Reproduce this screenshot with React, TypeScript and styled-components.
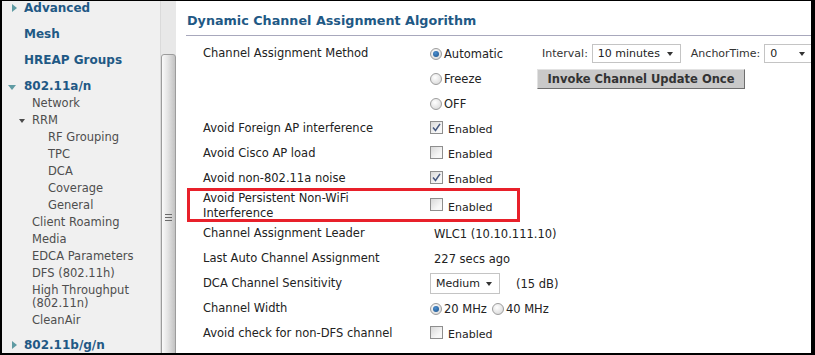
import React from "react";
import styled, { createGlobalStyle } from "styled-components";

const GlobalStyle = createGlobalStyle`
  html, body {
    margin: 0;
    padding: 0;
    background: #000;
  }
  body {
    font-family: "DejaVu Sans", Verdana, sans-serif;
  }
`;

const Frame = styled.div`
  width: 815px;
  height: 355px;
  box-sizing: border-box;
  border-style: solid;
  border-color: #000;
  border-width: 1px 4px 2px 2px;
  display: flex;
  overflow: hidden;
  background: #fff;
`;

/* ---------- left navigation ---------- */

const Sidebar = styled.nav`
  width: 158px;
  flex-shrink: 0;
  background: #f0f0f0;
  overflow: hidden;
`;

const NavList = styled.div`
  margin-top: -6px;
  display: flex;
  flex-direction: column;
`;

const Header = styled.div<{ $gap?: number }>`
  height: 26px;
  display: flex;
  align-items: center;
  padding-left: 6px;
  margin-top: ${p => p.$gap ?? 0}px;
  font-size: 12px;
  font-weight: bold;
  color: #1f5985;
  white-space: nowrap;
`;

const CaretSlot = styled.span`
  width: 16px;
  flex-shrink: 0;
  display: flex;
  align-items: center;
`;

const Caret = styled.span<{ $open?: boolean }>`
  width: 0;
  height: 0;
  ${p =>
    p.$open
      ? `border-left: 4.5px solid transparent;
         border-right: 4.5px solid transparent;
         border-top: 5px solid #5f9ba3;
         margin-top: 2px;`
      : `border-top: 4.5px solid transparent;
         border-bottom: 4.5px solid transparent;
         border-left: 5px solid #5f9ba3;
         margin-left: 4px;`}
`;

const SubList = styled.div`
  margin-top: -4px;
  display: flex;
  flex-direction: column;
`;

const SubItem = styled.div<{ $indent: number }>`
  padding: 2px 4px 2px ${p => p.$indent}px;
  line-height: 13px;
  font-size: 11.5px;
  color: #4e4e4e;
  display: flex;
  align-items: center;
`;

const SmallCaret = styled.span`
  width: 0;
  height: 0;
  border-left: 3px solid transparent;
  border-right: 3px solid transparent;
  border-top: 4px solid #4a4a4a;
  margin-left: -13px;
  margin-right: 7px;
`;

/* ---------- scrollbar column ---------- */

const ScrollTrack = styled.div`
  width: 16px;
  flex-shrink: 0;
  box-sizing: border-box;
  background: #e8e8e8;
  border-left: 1px solid #dadada;
  display: flex;
  flex-direction: column;
`;

const ScrollThumb = styled.div`
  margin-top: 53px;
  flex: 1;
  margin-bottom: -20px;
  border: 1px solid #9c9c9c;
  border-radius: 3px 3px 0 0;
  background: linear-gradient(to right, #fafafa, #e4e4e4 45%, #c2c2c2);
  display: flex;
  justify-content: center;
`;

const Grip = styled.div`
  margin-top: 159px;
  width: 7px;
  height: 7px;
  background: repeating-linear-gradient(
    to bottom,
    #6a6a6a 0,
    #6a6a6a 1px,
    transparent 1px,
    transparent 3px
  );
`;

/* ---------- main panel ---------- */

const Main = styled.main`
  flex: 1;
  padding-left: 10px;
  color: #222;
  font-size: 11.5px;
`;

const Title = styled.h1`
  margin: 0;
  padding: 10px 0 4px 1px;
  line-height: 20px;
  font-size: 12.75px;
  font-weight: bold;
  color: #1f5985;
  border-bottom: 1px solid #a8a8bc;
`;

const Form = styled.div`
  margin: 5px 0 0 17px;
  display: flex;
  flex-direction: column;
`;

const Row = styled.div<{ $tall?: boolean }>`
  position: relative;
  display: grid;
  grid-template-columns: 227px 1fr;
  align-items: center;
  height: ${p => (p.$tall ? 30 : 25)}px;
`;

const Label = styled.div`
  line-height: 15px;
`;

const Value = styled.div`
  display: flex;
  align-items: center;
  white-space: nowrap;
`;

const Highlight = styled.div`
  position: absolute;
  left: -16px;
  top: -3px;
  width: 333px;
  height: 34px;
  box-sizing: border-box;
  border: 3px solid #e8202a;
  pointer-events: none;
`;

const RadioOption = styled.span<{ $width?: number }>`
  display: inline-flex;
  align-items: center;
  gap: 2px;
  ${p => (p.$width ? `width: ${p.$width}px;` : "margin-right: 5px;")}
`;

const RadioCircle = styled.span<{ $checked?: boolean }>`
  width: 12px;
  height: 12px;
  box-sizing: border-box;
  border-radius: 50%;
  border: 1px solid #9d9d9d;
  background: radial-gradient(circle at 40% 35%, #ffffff, #d2d2d2);
  display: inline-flex;
  align-items: center;
  justify-content: center;
  &::after {
    content: "";
    display: ${p => (p.$checked ? "block" : "none")};
    width: 6px;
    height: 6px;
    border-radius: 50%;
    background: radial-gradient(circle at 40% 35%, #4c8fd0, #1a4f86);
  }
`;

const CheckBox = styled.span`
  width: 13px;
  height: 13px;
  box-sizing: border-box;
  border: 1px solid #8e8e8e;
  background: linear-gradient(135deg, #d8d8d8, #f7f7f7 70%);
  display: inline-flex;
  align-items: center;
  justify-content: center;
  margin-top: -3px;
`;

const CheckText = styled.span`
  margin-left: 5px;
  padding-top: 2px;
  font-size: 11px;
`;

const InlineLabel = styled.span<{ $ml: number }>`
  margin-left: ${p => p.$ml}px;
  margin-right: 4px;
  font-size: 11px;
  color: #333;
`;

const SelectBox = styled.span<{ $width: number; $height?: number }>`
  width: ${p => p.$width}px;
  height: ${p => p.$height ?? 19}px;
  box-sizing: border-box;
  border: 1px solid #c4c4c4;
  background: #fff;
  display: inline-flex;
  align-items: center;
  justify-content: space-between;
  padding: 0 7px 0 5px;
  font-size: 11px;
  color: #222;
`;

const SelectArrow = styled.span`
  width: 0;
  height: 0;
  border-left: 3.5px solid transparent;
  border-right: 3.5px solid transparent;
  border-top: 4px solid #333;
`;

const Button = styled.button`
  width: 208px;
  height: 20px;
  box-sizing: border-box;
  padding: 0;
  border: 1px solid;
  border-color: #e2e2e2 #6e6e6e #6e6e6e #e2e2e2;
  background: #c9c9c9;
  font-family: inherit;
  font-size: 11.5px;
  font-weight: bold;
  color: #333;
`;

const PlainValue = styled.span<{ $ml?: number }>`
  margin-left: ${p => p.$ml ?? 4}px;
`;

function Radio({ label, checked, width }: { label: string; checked?: boolean; width?: number }) {
  return (
    <RadioOption $width={width}>
      <RadioCircle $checked={checked} />
      {label}
    </RadioOption>
  );
}

function Check({ checked }: { checked?: boolean }) {
  return (
    <>
      <CheckBox>
        {checked && (
          <svg width="9" height="9" viewBox="0 0 9 9">
            <path d="M1 4.5 L3.5 7.5 L8 0.8" fill="none" stroke="#46587f" strokeWidth="1.5" />
          </svg>
        )}
      </CheckBox>
      <CheckText>Enabled</CheckText>
    </>
  );
}

function Select({ text, width, height }: { text: string; width: number; height?: number }) {
  return (
    <SelectBox $width={width} $height={height}>
      {text}
      <SelectArrow />
    </SelectBox>
  );
}

const subItems: [string, number, boolean?][] = [
  ["Network", 30],
  ["RRM", 30, true],
  ["RF Grouping", 46],
  ["TPC", 46],
  ["DCA", 46],
  ["Coverage", 46],
  ["General", 46],
  ["Client Roaming", 30],
  ["Media", 30],
  ["EDCA Parameters", 30],
  ["DFS (802.11h)", 30],
  ["High Throughput (802.11n)", 30],
  ["CleanAir", 30]
];

export default function App() {
  return (
    <>
      <GlobalStyle />
      <Frame>
        <Sidebar>
          <NavList>
            <Header>
              <CaretSlot>
                <Caret />
              </CaretSlot>
              Advanced
            </Header>
            <Header>
              <CaretSlot />
              Mesh
            </Header>
            <Header>
              <CaretSlot />
              HREAP Groups
            </Header>
            <Header>
              <CaretSlot>
                <Caret $open />
              </CaretSlot>
              802.11a/n
            </Header>
            <SubList>
              {subItems.map(([name, indent, caret]) => (
                <SubItem key={name} $indent={indent}>
                  {caret && <SmallCaret />}
                  {name}
                </SubItem>
              ))}
            </SubList>
            <Header $gap={3}>
              <CaretSlot>
                <Caret />
              </CaretSlot>
              802.11b/g/n
            </Header>
          </NavList>
        </Sidebar>

        <ScrollTrack>
          <ScrollThumb>
            <Grip />
          </ScrollThumb>
        </ScrollTrack>

        <Main>
          <Title>Dynamic Channel Assignment Algorithm</Title>
          <Form>
            <Row>
              <Label>Channel Assignment Method</Label>
              <Value>
                <Radio label="Automatic" checked width={107} />
                <InlineLabel $ml={5}>Interval:</InlineLabel>
                <Select text="10 minutes" width={89} />
                <InlineLabel $ml={10}>AnchorTime:</InlineLabel>
                <Select text="0" width={49} />
              </Value>
            </Row>
            <Row>
              <Label />
              <Value>
                <Radio label="Freeze" width={107} />
                <Button>Invoke Channel Update Once</Button>
              </Value>
            </Row>
            <Row>
              <Label />
              <Value>
                <Radio label="OFF" />
              </Value>
            </Row>
            <Row>
              <Label>Avoid Foreign AP interference</Label>
              <Value>
                <Check checked />
              </Value>
            </Row>
            <Row>
              <Label>Avoid Cisco AP load</Label>
              <Value>
                <Check />
              </Value>
            </Row>
            <Row>
              <Label>Avoid non-802.11a noise</Label>
              <Value>
                <Check checked />
              </Value>
            </Row>
            <Row $tall>
              <Label>
                Avoid Persistent Non-WiFi
                <br />
                Interference
              </Label>
              <Value>
                <Check />
              </Value>
              <Highlight />
            </Row>
            <Row>
              <Label>Channel Assignment Leader</Label>
              <Value>
                <PlainValue>WLC1 (10.10.111.10)</PlainValue>
              </Value>
            </Row>
            <Row>
              <Label>Last Auto Channel Assignment</Label>
              <Value>
                <PlainValue>227 secs ago</PlainValue>
              </Value>
            </Row>
            <Row>
              <Label>DCA Channel Sensitivity</Label>
              <Value>
                <Select text="Medium" width={70} height={21} />
                <PlainValue $ml={16}>(15 dB)</PlainValue>
              </Value>
            </Row>
            <Row>
              <Label>Channel Width</Label>
              <Value>
                <Radio label="20 MHz" checked />
                <Radio label="40 MHz" />
              </Value>
            </Row>
            <Row>
              <Label>Avoid check for non-DFS channel</Label>
              <Value>
                <Check />
              </Value>
            </Row>
          </Form>
        </Main>
      </Frame>
    </>
  );
}
